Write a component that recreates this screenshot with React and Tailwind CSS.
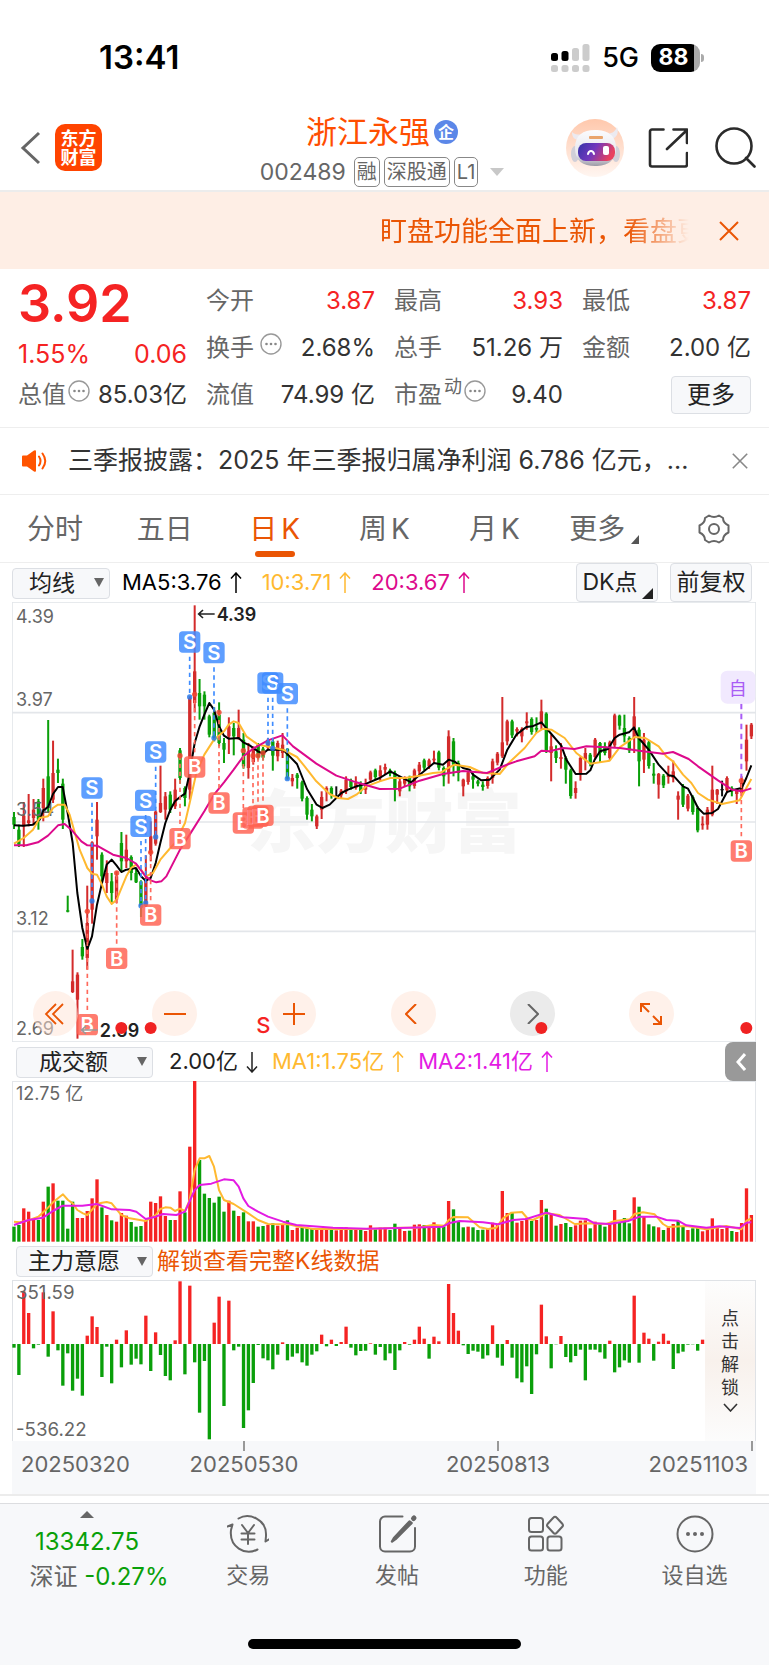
import React, { useState } from 'react'

// Every plot shares one horizontal scale: a trading day is STEP wide
const FIRST = 43
const STEP = 14.65
const dayX = (i) => FIRST + i * STEP

const UP = '#d32b2b'
const DOWN = '#0a9f0a'

// [colour, high, low, body top, body bottom]
const candles = [
    ['g', 757, 808, 772, 795], ['g', 795, 862, 810, 855], ['r', 727, 862, 768, 800], ['r', 703, 800, 782, 790],
    ['r', 718, 795, 750, 775], ['g', 718, 810, 725, 780], ['r', 657, 785, 685, 745], ['g', 481, 760, 650, 745],
    ['r', 543, 730, 640, 720], ['g', 597, 670, 630, 640], ['g', 657, 808, 672, 780], ['g', 1008, 1058, 1052, 1056],
    ['r', 1170, 1300, 1265, 1297], ['r', 1238, 1437, 1245, 1320], ['g', 1138, 1200, 1162, 1190], ['r', 978, 1230, 1090, 1195],
    ['r', 845, 1092, 848, 1050], ['r', 727, 900, 780, 830], ['g', 878, 970, 885, 950], ['r', 902, 1000, 940, 970],
    ['g', 940, 1030, 965, 1000], ['r', 935, 1030, 950, 1020], ['g', 817, 935, 850, 905], ['r', 825, 925, 870, 905],
    ['g', 887, 962, 892, 940], ['g', 925, 970, 940, 968], ['g', 962, 1072, 965, 1040], ['r', 887, 1045, 960, 1040],
    ['r', 785, 905, 830, 880], ['r', 752, 858, 756, 852], ['r', 618, 760, 730, 757], ['r', 697, 780, 710, 750],
    ['g', 695, 760, 705, 750], ['r', 657, 748, 690, 740], ['g', 565, 672, 572, 655], ['g', 680, 740, 685, 715],
    ['r', 410, 720, 415, 690], ['r', 137, 458, 335, 430], ['g', 358, 480, 400, 440], ['g', 395, 480, 405, 440],
    ['g', 465, 533], ['g', 443, 545, 460, 535], ['g', 428, 560, 465, 550], ['g', 535, 610, 550, 570],
    ['r', 473, 583, 500, 530], ['g', 490, 587, 505, 530], ['r', 450, 540, 505, 535], ['g', 520, 627, 540, 620],
    ['r', 550, 657, 575, 625], ['r', 560, 615], ['g', 550, 600], ['g', 562, 602],
    ['r', 535, 572], ['g', 535, 633, 545, 588], ['r', 543, 605, 550, 590], ['r', 520, 595, 555, 580],
    ['g', 565, 660, 568, 656], ['r', 643, 680, 655, 665], ['g', 640, 687, 645, 655], ['g', 663, 725],
    ['g', 710, 780, 715, 765], ['g', 733, 785, 750, 770], ['r', 765, 808], ['r', 695, 778, 712, 750],
    ['r', 680, 725, 685, 695], ['g', 680, 717, 685, 705], ['k', 680, 715, 708, 711], ['r', 688, 715],
    ['r', 650, 703, 660, 695], ['g', 657, 690], ['r', 650, 690, 670, 685], ['g', 665, 703],
    ['r', 657, 703, 675, 690], ['r', 633, 668], ['g', 627, 660], ['r', 617, 665, 632, 650],
    ['r', 612, 645, 622, 630], ['g', 627, 650], ['g', 633, 725, 640, 690], ['r', 653, 710, 665, 695],
    ['r', 650, 680], ['g', 648, 695, 655, 680], ['r', 627, 687], ['r', 607, 650, 615, 635],
    ['g', 597, 632], ['r', 597, 628], ['r', 573, 610, 597, 602], ['g', 573, 632],
    ['g', 620, 680, 625, 650], ['r', 512, 672, 530, 640], ['g', 535, 650, 545, 615], ['g', 603, 665, 610, 640],
    ['r', 657, 710, 660, 680], ['r', 633, 675], ['g', 640, 687, 650, 660], ['g', 660, 680],
    ['g', 665, 693, 675, 682], ['r', 650, 687], ['r', 597, 672, 605, 655], ['r', 577, 617],
    ['r', 412, 595, 548, 590], ['r', 480, 557, 485, 545], ['g', 480, 535], ['r', 503, 530, 508, 515],
    ['r', 503, 548, 508, 530], ['r', 458, 510, 485, 491], ['g', 473, 525], ['g', 473, 520, 505, 510],
    ['r', 420, 508, 455, 495], ['g', 458, 580, 462, 575], ['r', 525, 665, 560, 580], ['g', 557, 610, 575, 595],
    ['r', 550, 627, 592, 598], ['g', 590, 672, 595, 630], ['g', 627, 717], ['r', 665, 717, 685, 700],
    ['r', 590, 663, 595, 640], ['r', 565, 632, 580, 600], ['g', 580, 620], ['r', 535, 600],
    ['g', 547, 608, 550, 580], ['g', 548, 587, 560, 580], ['r', 543, 603], ['r', 462, 565],
    ['g', 465, 510, 468, 498], ['g', 465, 548, 505, 530], ['g', 530, 580], ['r', 412, 580, 470, 535],
    ['g', 503, 680, 510, 605], ['r', 520, 640, 540, 600], ['g', 543, 627], ['g', 610, 672, 642, 648],
    ['r', 640, 717, 643, 675], ['g', 643, 685], ['r', 618, 672, 645, 652], ['r', 603, 668, 635, 655],
    ['r', 695, 780, 708, 720], ['g', 673, 742, 680, 735], ['r', 703, 755], ['g', 707, 765],
    ['g', 740, 818, 745, 812], ['r', 770, 810, 792, 797], ['r', 742, 810, 750, 795], ['r', 618, 770, 690, 765],
    ['r', 688, 733, 690, 705], ['k', 663, 710, 688, 692], ['r', 650, 700], ['g', 680, 710, 685, 695],
    ['r', 688, 733, 693, 703], ['r', 650, 710, 670, 700], ['r', 495, 633, 540, 605], ['r', 490, 538],
]

const ma5 = '43,797 70,798 100,795 120,780 131,752 145,742 160,703 175,682 189,682 204,760 219,850 233,1000 248,1105 263,1168 277,1130 292,1035 307,970 321,915 336,900 351,918 365,937 380,930 409,925 424,950 438,963 453,955 468,910 482,850 497,790 512,750 526,725 541,712 556,702 570,640 585,550 600,500 614,465 629,430 643,450 658,500 673,528 687,537 717,535 731,548 750,557 775,575 790,582 804,570 850,570 892,613 922,688 951,735 968,745 990,735 1025,700 1045,690 1070,680 1100,672 1140,655 1172,635 1200,650 1235,668 1260,645 1303,610 1330,615 1347,600 1365,606 1390,625 1410,630 1420,645 1445,662 1470,660 1500,630 1523,570 1550,525 1580,502 1598,500 1625,488 1655,523 1685,558 1700,600 1728,643 1760,642 1772,632 1785,600 1801,575 1825,568 1845,535 1860,525 1888,518 1903,503 1917,535 1947,570 1977,615 2007,647 2023,650 2050,680 2065,687 2080,715 2095,745 2112,762 2137,760 2155,748 2182,697 2197,692 2226,685 2240,655 2255,617'
const ma10 = '43,852 72,835 100,810 120,775 145,770 160,745 175,735 195,735 210,765 240,870 263,925 277,942 292,945 307,975 321,1010 336,1033 351,1020 380,950 394,925 409,915 424,930 438,950 460,940 482,900 512,865 526,850 541,820 556,790 570,730 590,640 614,585 643,540 673,515 687,495 702,485 717,490 740,530 775,555 800,560 850,570 892,592 915,620 950,665 990,703 1015,715 1045,718 1070,705 1100,680 1140,665 1172,655 1215,655 1250,650 1300,640 1325,638 1345,625 1365,615 1410,622 1450,640 1500,643 1527,610 1575,565 1610,520 1630,507 1655,510 1695,535 1730,580 1772,612 1830,603 1860,563 1905,532 1937,535 1977,560 2000,590 2020,605 2050,645 2075,670 2095,700 2125,720 2167,733 2220,722 2237,690 2255,658'
const ma20 = '43,857 80,857 115,848 145,828 175,797 195,793 215,810 245,845 263,857 292,858 340,885 380,895 409,912 438,950 455,963 470,968 485,965 500,950 541,870 570,825 614,755 643,705 673,668 702,630 731,590 760,567 805,542 848,527 880,560 950,612 1010,648 1070,668 1140,688 1200,687 1260,663 1330,643 1390,634 1462,640 1527,613 1550,605 1605,590 1625,573 1650,575 1690,565 1725,568 1760,560 1860,565 1930,575 1990,582 2020,577 2067,598 2095,620 2155,662 2197,690 2226,695 2255,686'

// [letter, x, badge y, dot y]
const marks = [
    ['S', 277, 685, 1024], ['S', 438, 722, 1030], ['S', 424, 800, 1038], ['S', 468, 577, 832],
    ['S', 570, 247, 412], ['S', 643, 279, 535], ['S', 805, 370, 550], ['S', 819, 370, 566], ['S', 863, 402, 657],
    ['B', 263, 1395, 1055], ['B', 351, 1196, 940], ['B', 453, 1066, 878], ['B', 541, 837, 588],
    ['B', 585, 622, 404], ['B', 658, 730, 458], ['B', 731, 790, 573], ['B', 760, 775, 588],
    ['B', 775, 770, 588], ['B', 790, 767, 580], ['B', 2225, 874, 663],
]

// Top edge of each turnover bar; the base line is at 605
const turnover = [
    560, 555, 505, 515, 540, 540, 485, 440, 430, 482, 482, 566, 485, 534, 534, 513, 475, 418, 502, 525,
    541, 545, 519, 527, 546, 560, 558, 541, 485, 489, 469, 528, 540, 540, 454, 517, 320, 123, 360, 461,
    474, 488, 470, 515, 482, 512, 528, 517, 544, 544, 560, 558, 555, 550, 557, 553, 541, 570, 563, 563,
    563, 566, 569, 568, 567, 568, 571, 569, 562, 568, 566, 566, 573, 556, 568, 563, 563, 570, 551, 563,
    573, 572, 554, 553, 555, 560, 547, 560, 560, 483, 508, 545, 562, 560, 562, 570, 569, 567, 548, 555,
    453, 519, 519, 548, 543, 535, 543, 540, 480, 506, 523, 557, 552, 549, 561, 556, 542, 541, 565, 545,
    550, 560, 553, 510, 546, 534, 550, 472, 500, 530, 553, 559, 562, 570, 562, 552, 543, 559, 570, 565,
    562, 574, 570, 535, 564, 567, 563, 573, 576, 549, 445, 525,
]
const turnoverDown = [0, 1, 5, 7, 9, 10, 11, 12, 18, 20, 24, 25, 26, 32, 35, 38, 39, 40, 41, 42, 43, 45, 47, 50, 51, 53, 56, 59, 60, 61, 65, 69, 71, 74, 77, 78, 81, 84, 87, 88, 90, 91, 92, 94, 95, 96, 102, 106, 109, 111, 113, 114, 118, 120, 121, 124, 125, 126, 128, 130, 131, 133, 136, 137, 139, 140, 147]
const volMa1 = '43,545 60,547 90,540 116,530 145,503 160,487 175,475 190,463 205,480 219,490 233,510 250,520 263,525 278,508 292,492 307,488 321,486 336,490 365,525 390,535 438,543 468,525 482,507 497,502 512,503 526,513 541,506 556,513 570,480 585,390 600,355 614,355 629,348 643,380 658,450 673,480 702,492 746,520 775,540 805,552 865,553 900,560 940,567 1000,567 1100,567 1200,563 1250,563 1300,555 1335,557 1347,540 1361,531 1405,532 1440,562 1465,567 1490,563 1510,535 1535,518 1567,516 1585,537 1600,540 1640,520 1680,525 1725,552 1770,550 1820,552 1845,543 1890,538 1905,522 1930,517 1965,523 1990,552 2005,561 2060,558 2120,568 2180,558 2225,568 2240,543 2255,535'
const volMa2 = '43,555 87,540 130,533 160,513 189,497 248,497 292,492 336,508 390,510 410,515 438,537 468,530 490,522 530,525 556,515 585,450 600,435 635,431 673,418 702,421 717,440 731,475 746,498 775,515 805,530 850,545 890,555 1000,563 1100,566 1200,564 1330,560 1347,550 1380,543 1450,547 1495,553 1540,540 1580,537 1640,518 1690,532 1760,537 1785,550 1830,552 1885,543 1920,530 1970,530 2000,540 2035,542 2060,556 2120,563 2160,559 2220,564 2240,548 2255,547'

// End of each bar; above 313 is an inflow, below it an outflow
const intent = [
    324, 406, 155, 220, 326, 315, 158, 351, 215, 332, 438, 341, 453, 417, 468, 288, 230, 262, 412, 321,
    431, 300, 383, 272, 375, 357, 374, 228, 394, 278, 346, 409, 422, 302, 125, 404, 138, 368, 519, 364,
    599, 249, 171, 499, 183, 332, 321, 565, 512, 430, 316, 356, 362, 389, 345, 308, 362, 351, 341, 368,
    378, 345, 335, 285, 320, 300, 319, 307, 261, 324, 347, 334, 333, 311, 345, 322, 362, 341, 391, 332,
    307, 315, 300, 261, 297, 357, 291, 305, 313, 133, 220, 273, 317, 343, 333, 336, 357, 347, 257, 354,
    378, 301, 354, 416, 428, 380, 463, 344, 195, 290, 386, 314, 289, 352, 368, 349, 330, 422, 330, 330,
    338, 357, 303, 398, 383, 362, 369, 168, 369, 279, 297, 363, 306, 282, 303, 388, 341, 336, 315, 314,
    333, 300,
]

const tabs = ['分时', '五日', '日K', '周K', '月K', '更多']

const Arrow = ({ down }) => (
    <svg width="12" height="22" viewBox="0 0 12 22" fill="none" stroke="currentColor" strokeWidth="1.5" className="shrink-0">
        {down ? <path d="M6 1v20M1 15.500l5 5.500 5-5.500" /> : <path d="M6 21V1M1 6.500L6 1l5 5.500" />}
    </svg>
)

const Close = ({ className }) => (
    <svg viewBox="0 0 20 20" fill="none" stroke="currentColor" className={className}>
        <path d="M1 1l18 18M19 1L1 19" />
    </svg>
)

const More = () => (
    <svg width="22" height="22" viewBox="0 0 22 22" fill="none" stroke="#999" strokeWidth="1.4" className="mb-2 shrink-0">
        <circle cx="11" cy="11" r="10" />
        <g fill="#888" stroke="none">
            <circle cx="6.500" cy="11" r="1.300" /><circle cx="11" cy="11" r="1.300" /><circle cx="15.500" cy="11" r="1.300" />
        </g>
    </svg>
)

const Quote = ({ label, value, red, children }) => (
    <div className="flex h-[47px] items-center justify-between whitespace-nowrap">
        <span className="flex items-center gap-1.5 text-[#666]">{label}{children}</span>
        <span className={red ? 'text-[#f52323]' : 'text-[#333]'}>{value}</span>
    </div>
)

const Picker = ({ label, options, className }) => (
    <div className={'relative h-[31px] shrink-0 ' + className}>
        <select aria-label={label} className="h-full w-full appearance-none rounded border border-[#dcdfe4] bg-[#f7f8fa] text-[23px] leading-none text-[#222] focus:outline-none">
            {options.map((o) => <option key={o}>{o}</option>)}
        </select>
        <svg width="10" height="9" viewBox="0 0 10 9" className="pointer-events-none absolute top-[11px] right-[6px]">
            <path d="M0 0h10L5 9z" fill="#666" />
        </svg>
    </div>
)

const StatusBar = () => (
    <div className="flex h-[105px] items-center justify-between pt-[10px] pr-[65px] pl-[99px] text-black">
        <span className="text-[33px] font-semibold">13:41</span>
        <div className="flex items-center gap-3">
            <svg width="39" height="28" viewBox="0 0 39 28" fill="#ccc">
                <rect x="0" y="9" width="7" height="8" rx="2.500" fill="#000" />
                <rect x="10.500" y="7" width="7" height="10" rx="2.500" fill="#000" />
                <rect x="21" y="4" width="7" height="13" rx="2.500" />
                <rect x="31.500" y="0" width="7" height="17" rx="2.500" />
                <rect x="0" y="21" width="7" height="7" rx="2.500" />
                <rect x="10.500" y="21" width="7" height="7" rx="2.500" />
                <rect x="21" y="21" width="7" height="7" rx="2.500" />
                <rect x="31.500" y="21" width="7" height="7" rx="2.500" />
            </svg>
            <span className="pt-0.5 text-[27px] font-medium">5G</span>
            <div className="flex items-center gap-px">
                <span className="flex h-7 w-[49px] items-center justify-center rounded-[9px] bg-linear-to-r from-black from-88% to-[#aaa] to-88% pr-1 text-[23px] font-bold text-white">88</span>
                <span className="h-2 w-[3px] rounded-r-full bg-[#aaa]" />
            </div>
        </div>
    </div>
)

const Robot = () => (
    <svg width="58" height="58" viewBox="0 0 58 58">
        <defs>
            <linearGradient id="halo" x1="0" y1="0" x2="0" y2="1">
                <stop offset="0" stopColor="#ffc8ac" /><stop offset="1" stopColor="#fff6f1" />
            </linearGradient>
            <linearGradient id="shell" x1="0" y1="0" x2="0" y2="1">
                <stop offset="0" stopColor="#fbfbfd" /><stop offset=".7" stopColor="#e6e6ec" /><stop offset="1" stopColor="#9c9ba6" />
            </linearGradient>
            <linearGradient id="visor" x1="0" y1="0" x2="1" y2="0.300">
                <stop offset="0" stopColor="#3534a8" /><stop offset=".5" stopColor="#7137bd" /><stop offset="1" stopColor="#e8415f" />
            </linearGradient>
        </defs>
        <circle cx="29" cy="29" r="29" fill="url(#halo)" />
        <path d="M6 13c0 5 2 8 8 8l4-6c-5 1-9 1-12-2zM51 8c2 6 0 10-5 12l-6-5c5 0 9-2 11-7z" fill="#eceaf0" />
        <ellipse cx="9" cy="35" rx="4" ry="8" fill="#d0cfd8" />
        <ellipse cx="50" cy="35" rx="4" ry="8" fill="#d0cfd8" />
        <path d="M9 29c0-13 8-18 20-18s21 5 21 18c0 13-9 18-21 18S9 42 9 29z" fill="url(#shell)" />
        <rect x="23" y="17" width="14" height="3" rx="1" fill="#e9a46c" />
        <rect x="12" y="24" width="37" height="18" rx="8" fill="url(#visor)" />
        <path d="M22 35c1-4 5-4 6 0" stroke="#fff" strokeWidth="2" fill="none" strokeLinecap="round" />
        <rect x="37" y="27" width="6" height="9" rx="2" fill="#fff" />
    </svg>
)

const Header = () => (
    <header className="grid h-[87px] grid-cols-[1fr_auto_1fr] items-center border-b-2 border-[#ececec] pr-[13px] pl-2">
        <div className="flex items-center gap-[13px] pl-3">
            <button aria-label="返回">
                <svg width="22" height="34" viewBox="0 0 22 34" fill="none" stroke="#666" strokeWidth="3"><path d="M19 2L3 17l16 15" /></svg>
            </button>
            <a href="#" className="flex h-[47px] w-[47px] flex-col items-center justify-center rounded-[10px] bg-[#ff4400] text-[18px] leading-[19px] font-bold text-white">
                <span>东方</span><span>财富</span>
            </a>
        </div>
        <div className="flex flex-col items-center gap-1.5 pt-1 text-[#666]">
            <h1 className="flex items-center gap-1 text-[31px] leading-[38px] text-[#ff4e00]">
                浙江永强
                <span className="flex h-6 w-6 items-center justify-center rounded-full bg-[#5b87e8] text-base font-bold text-white">企</span>
            </h1>
            <div className="flex items-center gap-1 text-xl leading-7">
                <span className="mr-1 text-[23px]">002489</span>
                <span className="rounded-[5px] border border-[#888] px-0.5">融</span>
                <span className="rounded-[5px] border border-[#888] px-0.5">深股通</span>
                <span className="rounded-[5px] border border-[#888] px-0.5">L1</span>
                <svg width="14" height="8" viewBox="0 0 14 8" className="ml-2"><path d="M0 0h14L7 8z" fill="#c8c8c8" /></svg>
            </div>
        </div>
        <div className="flex items-center justify-end gap-6">
            <button aria-label="智能助手"><Robot /></button>
            <button aria-label="分享" className="mr-[3px]">
                <svg width="40" height="40" viewBox="0 0 40 40" fill="none" stroke="#2b2b2b" strokeWidth="2.600" strokeLinecap="round" strokeLinejoin="round">
                    <path d="M15.500 1.500H4a2 2 0 00-2 2v33a2 2 0 002 2h33a2 2 0 002-2V25M25.500 1.500H39V15M39 2L19 21" />
                </svg>
            </button>
            <button aria-label="搜索">
                <svg width="41" height="41" viewBox="0 0 41 41" fill="none" stroke="#2b2b2b" strokeWidth="2.600" strokeLinecap="round">
                    <circle cx="19" cy="19" r="17.500" /><path d="M31 31l8.500 8.500" />
                </svg>
            </button>
        </div>
    </header>
)

const PriceChart = () => (
    <div className="relative">
        <svg viewBox="37 127 2232 1320" className="block h-auto w-full" fontSize="54">
            <text x="1155" y="862" textAnchor="middle" fontSize="206" fontWeight="900" fill="#f6f6f6">东方财富</text>
            <g stroke="#e3e6ea" strokeWidth="5">
                <path d="M37 459H2269M37 787H2269M37 1115H2269" />
                <rect x="38" y="128" width="2230" height="1318" fill="none" strokeWidth="3" />
            </g>
            {candles.map(([c, high, low, top, bottom], i) => {
                const colour = c === 'r' ? UP : c === 'g' ? DOWN : '#111'
                const x = dayX(i)
                return (
                    <g key={i} fill={colour}>
                        <rect x={x - 3} y={high} width="6" height={low - high} />
                        <rect x={x - 5} y={top ?? high + 5} width="10" height={(bottom ?? low - 8) - (top ?? high + 5)} />
                    </g>
                )
            })}
            <g fill="#666">
                <text x="49" y="190">4.39</text>
                <text x="49" y="438">3.97</text>
                <text x="49" y="768">3.54</text>
                <text x="49" y="1097">3.12</text>
                <text x="49" y="1427">2.69</text>
            </g>
            <g fill="none" strokeWidth="6" strokeLinejoin="round">
                <polyline points={ma5} stroke="#000" />
                <polyline points={ma10} stroke="#ffb930" />
                <polyline points={ma20} stroke="#dd0a8c" />
            </g>
            {marks.map(([letter, x, y, dot], i) => {
                const sell = letter === 'S'
                return (
                    <g key={i}>
                        <path d={`M${x} ${sell ? y + 44 : y - 44}V${dot}`} stroke={sell ? '#3f8cff' : '#ff6a5c'} strokeWidth="5" strokeDasharray="13 11" />
                        <circle cx={x} cy={dot} r="8" fill={sell ? '#2b7bea' : '#f0452f'} opacity=".85" />
                        <rect x={x - 32} y={y - 32} width="64" height="64" rx="11" fill={sell ? '#3f8cff' : '#ff6353'} opacity=".84" />
                        <text x={x} y={y + 22} textAnchor="middle" fontSize="61" fontWeight="600" fill="#fff">{letter}</text>
                    </g>
                )
            })}
            <path d="M2225 432V655" stroke="#a95cf5" strokeWidth="6" strokeDasharray="17 13" />
            <rect x="2163" y="333" width="104" height="99" rx="20" fill="#f1e9fe" />
            <text x="2214" y="405" textAnchor="middle" fontSize="54" fill="#a95cf5">自</text>
            <g fill="#222" fontWeight="600">
                <text x="651" y="183">4.39</text>
                <text x="300" y="1431">2.69</text>
            </g>
            <path d="M645 163H598M610 151l-13 12 13 12" stroke="#222" strokeWidth="5" fill="none" />
            <path d="M294 1411H247M259 1399l-13 12 13 12" stroke="#999" strokeWidth="5" fill="none" />
            <text x="791" y="1421" textAnchor="middle" fontSize="66" fontWeight="500" fill="#f52323">S</text>
        </svg>
        <div className="absolute right-[82px] bottom-[6px] left-[21px] flex justify-between">
            <button aria-label="最早" className="flex h-[45px] w-[45px] items-center justify-center rounded-full bg-[#ffe3d5]/50">
                <svg width="20" height="22" viewBox="0 0 20 22" fill="none" stroke="#ea5504" strokeWidth="1.800" className="mr-1"><path d="M12 1L2 11l10 10M19 1L9 11l10 10" /></svg>
            </button>
            <button aria-label="缩小" className="flex h-[45px] w-[45px] items-center justify-center rounded-full bg-[#ffe3d5]/50">
                <svg width="22" height="22" viewBox="0 0 22 22" stroke="#ea5504" strokeWidth="2"><path d="M0 11h22" /></svg>
            </button>
            <button aria-label="放大" className="flex h-[45px] w-[45px] items-center justify-center rounded-full bg-[#ffe3d5]/50">
                <svg width="22" height="22" viewBox="0 0 22 22" stroke="#ea5504" strokeWidth="2"><path d="M0 11h22M11 0v22" /></svg>
            </button>
            <button aria-label="向左" className="flex h-[45px] w-[45px] items-center justify-center rounded-full bg-[#ffe3d5]/50">
                <svg width="12" height="20" viewBox="0 0 12 20" fill="none" stroke="#ea5504" strokeWidth="2" className="mr-1"><path d="M11 0L1 10l10 10" /></svg>
            </button>
            <button aria-label="向右" className="flex h-[45px] w-[45px] items-center justify-center rounded-full bg-[#ebebeb]">
                <svg width="12" height="20" viewBox="0 0 12 20" fill="none" stroke="#666" strokeWidth="2" className="ml-0.5"><path d="M1 0l10 10L1 20" /></svg>
            </button>
            <button aria-label="全屏" className="flex h-[45px] w-[45px] items-center justify-center rounded-full bg-[#ffe3d5]/50">
                <svg width="22" height="22" viewBox="0 0 22 22" fill="none" stroke="#ea5504" strokeWidth="2"><path d="M1 9V1h9M1 1l8 8M13 21h8v-8M21 21l-8-8" /></svg>
            </button>
        </div>
        <svg viewBox="37 127 2232 1320" className="pointer-events-none absolute inset-0 h-full w-full" fill="#f02222">
            <circle cx="365" cy="1405" r="18" /><circle cx="453" cy="1405" r="18" />
            <circle cx="1625" cy="1405" r="18" /><circle cx="2240" cy="1405" r="18" />
        </svg>
    </div>
)

const TurnoverChart = () => (
    <svg viewBox="37 123 2232 483" className="block h-auto w-full">
        <path d="M38 606V124H2268V606" fill="none" stroke="#e3e6ea" strokeWidth="4" />
        {turnover.map((y, i) => (
            <rect key={i} x={dayX(i) - 5} y={y} width="10" height={605 - y} fill={turnoverDown.includes(i) ? DOWN : '#f52323'} />
        ))}
        <g fill="none" strokeWidth="6" strokeLinejoin="round">
            <polyline points={volMa1} stroke="#ffb930" />
            <polyline points={volMa2} stroke="#e31be3" />
        </g>
        <text x="49" y="180" fontSize="54" fill="#666">12.75 亿</text>
    </svg>
)

const IntentChart = () => (
    <div className="relative">
        <svg viewBox="37 121 2232 483" className="block h-auto w-full" fontSize="56" fill="#666">
            <path d="M38 604V122H2268V604" fill="none" stroke="#dfe2e6" strokeWidth="4" />
            {intent.map((y, i) => (
                <rect key={i} x={dayX(i) - 5} y={Math.min(y, 313)} width="10" height={Math.abs(y - 313)} fill={y > 313 ? DOWN : '#f52323'} />
            ))}
            <text x="49" y="179">351.59</text>
            <text x="49" y="589">-536.22</text>
        </svg>
        <button className="absolute top-px right-px bottom-0 flex w-[50px] flex-col items-center justify-center bg-linear-to-b from-[#fdfdfd] via-[#f8f1ec] to-[#fcfcfc] text-lg leading-[23px] text-[#333]">
            <span>点</span><span>击</span><span>解</span><span>锁</span>
            <svg width="15" height="9" viewBox="0 0 15 9" fill="none" stroke="#333" strokeWidth="1.600" className="mt-1 mb-1"><path d="M1 1l6.500 7L14 1" /></svg>
        </button>
    </div>
)

const NavItem = ({ label, children }) => (
    <button className="flex flex-col items-center gap-[7px] pt-2.5">
        <svg width="42" height="40" viewBox="0 0 42 40" fill="none" stroke="#666" strokeWidth="2" strokeLinecap="round" strokeLinejoin="round">{children}</svg>
        <span className="text-[22px] leading-7">{label}</span>
    </button>
)

const BottomNav = () => (
    <footer className="border-t border-[#dcdde0] bg-[#f7f8fa] text-[#666]">
        <nav className="grid h-[98px] grid-cols-[174px_repeat(4,1fr)] items-start">
            <a href="#" className="flex flex-col items-center pt-[7px] text-2xl leading-[35px]">
                <svg width="14" height="7" viewBox="0 0 14 7"><path d="M0 7h14L7 0z" fill="#666" /></svg>
                <span className="mt-1.5 text-[#09a009]">13342.75</span>
                <span className="pl-6 whitespace-nowrap">深证 <span className="text-[#09a009]">-0.27%</span></span>
            </a>
            <NavItem label="交易">
                <path d="M11.500 4.500C22-1.500 40 5 39 22l-.500 5.500M38.500 27.500l4-2.500M30.500 35.500C18 42 2 33 4 16l1.500-5.500M5.500 10.500l-5 2" />
                <path d="M15 11l6 8 6-8M14.500 19.500h13M14.500 25.500h13M21 19v11" />
            </NavItem>
            <NavItem label="发帖">
                <path d="M26.500 2.500H9a5 5 0 00-5 5v25a5 5 0 005 5h25a5 5 0 005-5V14" />
                <path d="M33.500 7.500L18 24l-2 3.500 3.500-2.500L35.500 9z" fill="#666" strokeWidth="2.500" />
                <path d="M37.500 4.500l.500-.500" strokeWidth="5" />
            </NavItem>
            <NavItem label="功能">
                <rect x="4" y="4" width="14" height="14" rx="2.500" />
                <rect x="4" y="22.500" width="14" height="14" rx="2.500" />
                <rect x="22.500" y="22.500" width="14" height="14" rx="2.500" />
                <path d="M28.500 3.500a2 2 0 013 0l6 6.500a2 2 0 010 2.500l-6 6.500a2 2 0 01-3 0l-6-6.500a2 2 0 010-2.500z" />
            </NavItem>
            <NavItem label="设自选">
                <circle cx="21" cy="20" r="17.500" />
                <g fill="#666" stroke="none"><circle cx="14" cy="20" r="2" /><circle cx="21" cy="20" r="2" /><circle cx="28" cy="20" r="2" /></g>
            </NavItem>
        </nav>
        <div className="flex justify-center pt-[37px] pb-4">
            <span className="h-2.5 w-[273px] rounded-full bg-black" />
        </div>
    </footer>
)

const App = () => {
    const [tab, setTab] = useState('日K')

    return (
        <div className="w-full bg-white font-[Inter,'Noto_Sans_CJK_SC',sans-serif] text-[#333]">
            <StatusBar />
            <Header />

            <div className="flex h-[77px] items-center justify-end bg-[#feeee5] pt-1 pr-[30px] text-[#ea5504]">
                <p className="w-[309px] overflow-hidden mask-r-from-80% text-[27px] whitespace-nowrap">盯盘功能全面上新，看盘更轻松</p>
                <button aria-label="关闭提示" className="mb-1 ml-[30px]"><Close className="h-5 w-5 stroke-2" /></button>
            </div>

            <section className="grid h-[158px] grid-cols-4 gap-x-[19px] px-[18px] text-2xl">
                <div className="pt-1 text-[#f52323]">
                    <div className="text-[52px] leading-[62px] font-semibold">3.92</div>
                    <div className="flex h-9 items-center justify-between pt-1 text-[25px]"><span>1.55%</span><span>0.06</span></div>
                    <div className="[&_span]:gap-0.5"><Quote label="总值" value="85.03亿"><More /></Quote></div>
                </div>
                <div className="pt-2">
                    <Quote label="今开" value="3.87" red />
                    <Quote label="换手" value="2.68%"><More /></Quote>
                    <Quote label="流值" value="74.99 亿" />
                </div>
                <div className="pt-2">
                    <Quote label="最高" value="3.93" red />
                    <Quote label="总手" value="51.26 万" />
                    <Quote label={<>市盈<span className="-mx-1 mb-4 text-lg leading-none">动</span></>} value="9.40"><More /></Quote>
                </div>
                <div className="pt-2">
                    <Quote label="最低" value="3.87" red />
                    <Quote label="金额" value="2.00 亿" />
                    <div className="flex h-[47px] items-center justify-end">
                        <button className="h-[38px] w-20 rounded border border-[#dcdfe4] bg-[#f7f8fa] leading-none text-[#222]">更多</button>
                    </div>
                </div>
            </section>

            <section className="flex h-[68px] items-center border-y border-[#eee] px-[21px] text-[25px]">
                <svg width="27" height="22" viewBox="0 0 27 22" className="shrink-0" fill="#ff5400">
                    <path d="M1 6.500q0-1 1-1h4L13 .5q2-1 2 1v19q0 2-2 1l-7-5H2q-1 0-1-1z" />
                    <path d="M18 6.500q3 4.500 0 9M21.500 3.500q5.500 7.500 0 15" fill="none" stroke="#ff5400" strokeWidth="2" strokeLinecap="round" />
                </svg>
                <p className="ml-5 flex-1 overflow-hidden whitespace-nowrap">三季报披露：2025 年三季报归属净利润 6.786 亿元，...</p>
                <button aria-label="关闭公告" className="text-[#888]"><Close className="h-4 w-4 stroke-2" /></button>
            </section>

            <nav className="grid h-[68px] grid-cols-7 border-b border-[#eee] text-[28px] text-[#666]">
                {tabs.map((name) => (
                    <button key={name} onClick={() => setTab(name)} className={'flex flex-col items-center pt-3 ' + (tab === name ? 'text-[#ea5504]' : '')}>
                        <span className="flex h-[44px] items-center gap-1">
                            <span>{name.replace('K', '')}</span>
                            {name.endsWith('K') && <span>K</span>}
                            {name === '更多' && <svg width="8" height="9" viewBox="0 0 8 9" className="mt-5 ml-0.5"><path d="M8 0v9H0z" fill="#555" /></svg>}
                        </span>
                        {tab === name && <span className="h-1.5 w-10 rounded-full bg-[#ea5504]" />}
                    </button>
                ))}
                <button aria-label="设置" className="flex items-center justify-center">
                    <svg width="32" height="30" viewBox="0 0 32 30" fill="none" stroke="#666" strokeWidth="2" strokeLinejoin="round">
                        <path d="M11 1.500q5 3 10 0l4 2.500q0 5 5.500 7.500v7q-5.500 2.500-5.500 7.500l-4 2.500q-5-3-10 0L7 26q0-5-5.500-7.500v-7Q7 9 7 4z" />
                        <circle cx="16" cy="15" r="5" />
                    </svg>
                </button>
            </nav>

            <main className="mr-[13px] ml-3">
                <div className="flex h-[39px] items-center text-[22px] whitespace-nowrap">
                    <Picker label="主图指标" options={['均线', '布林线']} className="w-[98px] [&>select]:pl-4" />
                    <span className="ml-3 flex items-center gap-2 text-black">MA5:3.76<Arrow /></span>
                    <span className="ml-5 flex items-center gap-2 text-[#ffb930]">10:3.71<Arrow /></span>
                    <span className="ml-5 flex items-center gap-2 text-[#dd0a8c]">20:3.67<Arrow /></span>
                    <button className="relative ml-auto h-full w-[82px] rounded border border-[#dcdfe4] bg-[#f7f8fa] pr-3.5 text-[23px] leading-none text-[#222]">
                        DK点
                        <svg width="11" height="11" viewBox="0 0 11 11" className="absolute right-1 bottom-0.5"><path d="M11 0v11H0z" fill="#222" /></svg>
                    </button>
                    <button className="mr-1 ml-3 h-full w-[82px] rounded border border-[#dcdfe4] bg-[#f7f8fa] text-[23px] leading-none text-[#222]">前复权</button>
                </div>
                <PriceChart />

                <div className="flex h-[39px] items-center pl-1 text-[22px] whitespace-nowrap">
                    <Picker label="副图指标一" options={['成交额', '成交量']} className="w-[137px] [&>select]:pl-[22px]" />
                    <span className="ml-4 flex items-center gap-2 text-[#222]">2.00亿<Arrow down /></span>
                    <span className="ml-3.5 flex items-center gap-2 text-[#ffb930]">MA1:1.75亿<Arrow /></span>
                    <span className="ml-3.5 flex items-center gap-2 text-[#e31be3]">MA2:1.41亿<Arrow /></span>
                    <button aria-label="展开" className="ml-auto flex h-full w-[31px] items-center justify-center rounded-l-lg bg-[#999]">
                        <svg width="10" height="18" viewBox="0 0 10 18" fill="none" stroke="#fff" strokeWidth="3"><path d="M9 1L2 9l7 8" /></svg>
                    </button>
                </div>
                <TurnoverChart />

                <div className="flex h-[38px] items-center pl-1">
                    <Picker label="副图指标二" options={['主力意愿', '资金流向']} className="w-[137px] [&>select]:pl-[11px]" />
                    <a href="#" className="ml-1 text-[23px] whitespace-nowrap text-[#ea5504]">解锁查看完整K线数据</a>
                </div>
                <IntentChart />

                <svg viewBox="0 0 744 53" className="block h-auto w-full bg-[#f7f8fa]" fontSize="22" fill="#666">
                    <path d="M232 0v10M486 0v10M740 0v10" stroke="#999" strokeWidth="2" />
                    <text x="9" y="31">20250320</text>
                    <text x="232" y="31" textAnchor="middle">20250530</text>
                    <text x="486" y="31" textAnchor="middle">20250813</text>
                    <text x="736" y="31" textAnchor="end">20251103</text>
                </svg>
            </main>
            <div className="h-[9px] border-t-2 border-[#ececec]" />
            <BottomNav />
        </div>
    )
}

export default App
